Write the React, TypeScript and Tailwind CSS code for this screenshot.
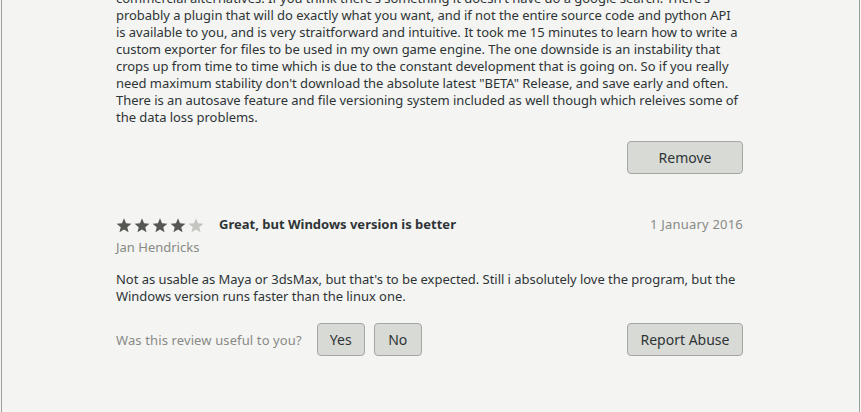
import React from "react";

const Star = ({ filled }: { filled: boolean }) => (
  <svg width="16" height="15" viewBox="0 0 24 23" className="shrink-0">
    <path
      d="M12 0.5l3.1 7.6 8.2.6-6.3 5.3 2 8-7-4.4-7 4.4 2-8L.7 8.7l8.2-.6z"
      fill={filled ? "#555753" : "#c4c5c1"}
    />
  </svg>
);

const Btn = ({ children, w }: { children: React.ReactNode; w: string }) => (
  <button
    className={`${w} h-[33px] rounded-[4px] border border-[#a5a7a2] bg-[#d8dad5] text-[#2e3436] text-[14px] leading-none`}
  >
    {children}
  </button>
);

const firstLines = [
  "commercial alternatives. If you think there's something it doesn't have do a google search. There's",
  "probably a plugin that will do exactly what you want, and if not the entire source code and python API",
  "is available to you, and is very straitforward and intuitive. It took me 15 minutes to learn how to write a",
  "custom exporter for files to be used in my own game engine. The one downside is an instability that",
  "crops up from time to time which is due to the constant development that is going on. So if you really",
  "need maximum stability don't download the absolute latest \"BETA\" Release, and save early and often.",
  "There is an autosave feature and file versioning system included as well though which releives some of",
  "the data loss problems.",
];

export default function App() {
  return (
    <div className="w-[861px] h-[412px] overflow-hidden bg-[#f4f4f3]">
      <div
        className="ml-[1px] w-[859px] h-[412px] overflow-hidden bg-[#f4f4f3] border-l border-r border-[#9d9e9b]"
        style={{ fontFamily: '"Noto Sans", sans-serif' }}
      >
        <div className="ml-[114px] w-[627px] flex flex-col">
          <div className="-mt-[10px] text-[13px] leading-[17px] text-[#2e3436] tracking-[-0.04px]">
            {firstLines.map((l, i) => (
              <div key={i} className="whitespace-nowrap">
                {l}
              </div>
            ))}
          </div>
          <div className="flex justify-end mt-[15px]">
            <Btn w="w-[116px]">Remove</Btn>
          </div>

          <div className="mt-[42px] flex items-center h-[18px]">
            <div className="flex gap-[2px]">
              <Star filled />
              <Star filled />
              <Star filled />
              <Star filled />
              <Star filled={false} />
            </div>
            <span className="ml-[15px] text-[13px] font-bold text-[#2e3436]">
              Great, but Windows version is better
            </span>
            <span className="ml-auto text-[13px] tracking-[0.2px] text-[#888a85]">1 January 2016</span>
          </div>
          <div className="mt-[5px] text-[13px] leading-[17px] text-[#888a85]">Jan Hendricks</div>
          <div className="mt-[15px] text-[13px] leading-[17px] text-[#2e3436] tracking-[-0.04px]">
            <div className="whitespace-nowrap">
              Not as usable as Maya or 3dsMax, but that's to be expected. Still i absolutely love the program, but the
            </div>
            <div className="whitespace-nowrap">Windows version runs faster than the linux one.</div>
          </div>
          <div className="mt-[18px] flex items-center">
            <span className="text-[13px] tracking-[0.12px] text-[#888a85] relative top-[1px]">
              Was this review useful to you?
            </span>
            <div className="ml-[15px] flex gap-[9px]">
              <Btn w="w-[48px]">Yes</Btn>
              <Btn w="w-[48px]">No</Btn>
            </div>
            <div className="ml-auto">
              <Btn w="w-[116px]">Report Abuse</Btn>
            </div>
          </div>
        </div>
      </div>
    </div>
  );
}
